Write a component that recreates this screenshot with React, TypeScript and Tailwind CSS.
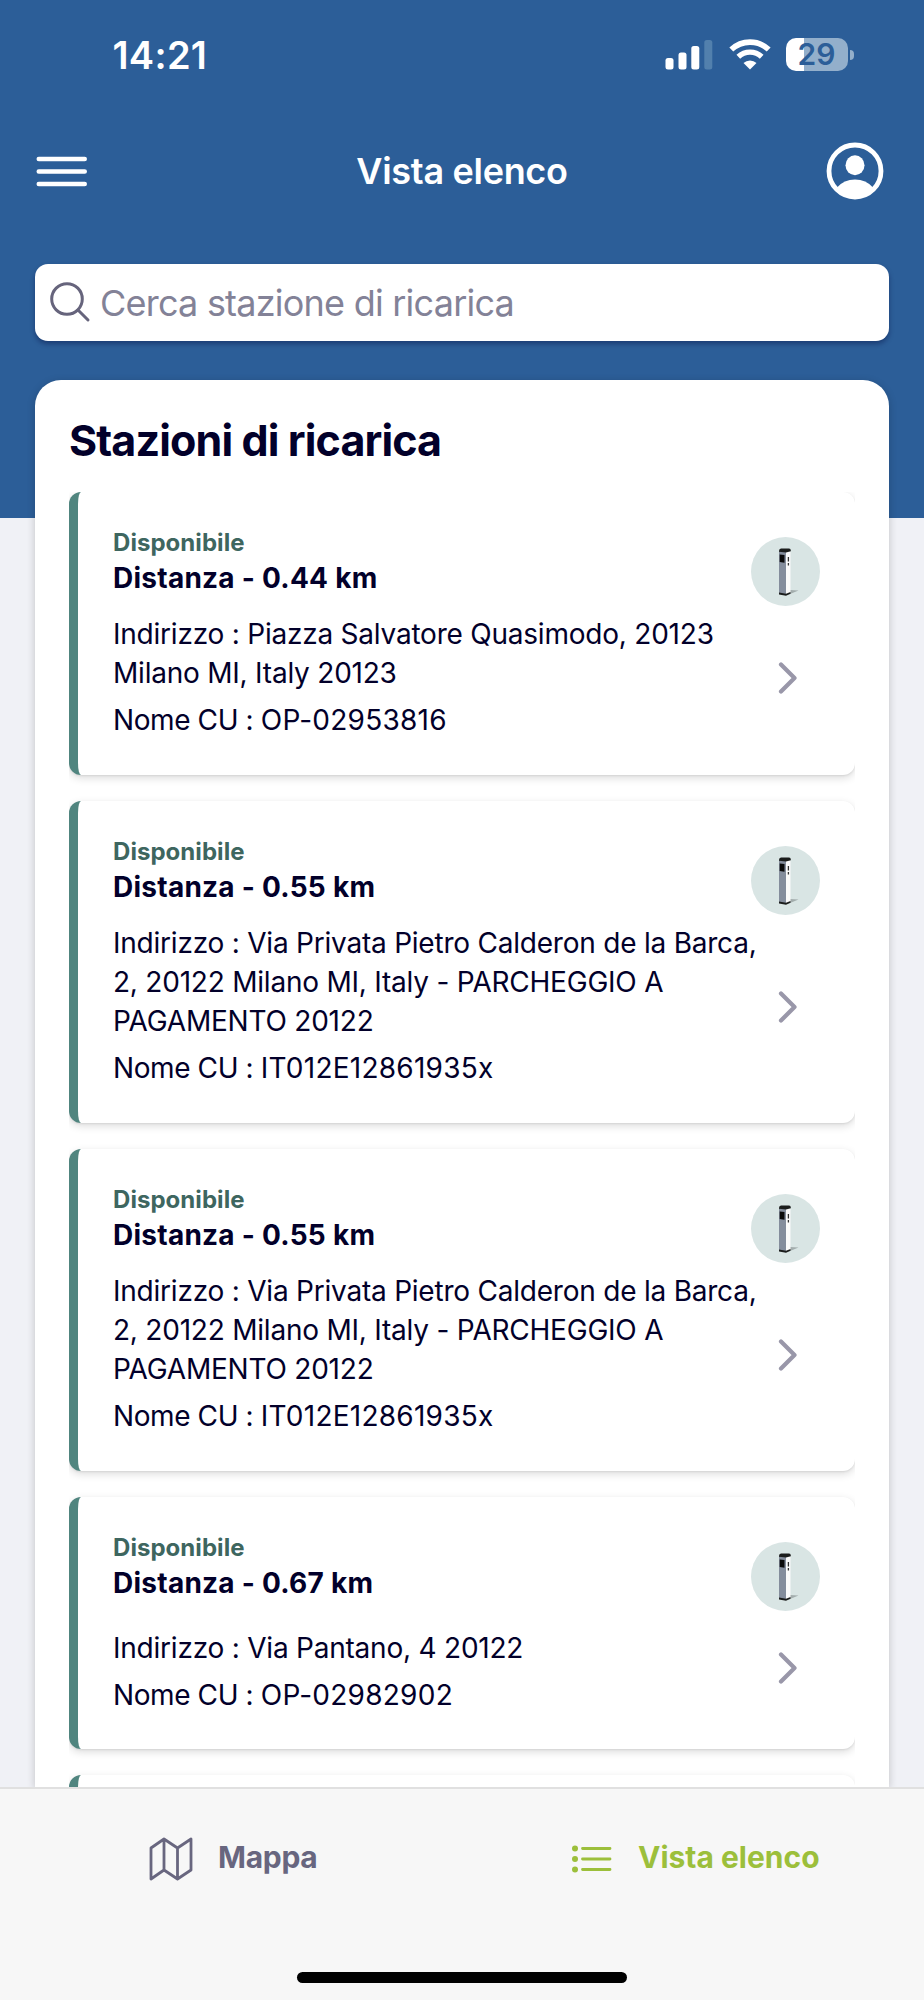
import React from "react";

type Station = {
  distance: string;
  address: string[];
  name: string;
  height: string;
  addressGap: string;
  chevronGap: string;
};

const stations: Station[] = [
  {
    distance: "0.44",
    address: ["Indirizzo : Piazza Salvatore Quasimodo, 20123", "Milano MI, Italy 20123"],
    name: "OP-02953816",
    height: "h-[283px]",
    addressGap: "mt-[18px]",
    chevronGap: "mt-[56px]",
  },
  {
    distance: "0.55",
    address: [
      "Indirizzo : Via Privata Pietro Calderon de la Barca,",
      "2, 20122 Milano MI, Italy - PARCHEGGIO A",
      "PAGAMENTO 20122",
    ],
    name: "IT012E12861935x",
    height: "h-[322px]",
    addressGap: "mt-[18px]",
    chevronGap: "mt-[76px]",
  },
  {
    distance: "0.55",
    address: [
      "Indirizzo : Via Privata Pietro Calderon de la Barca,",
      "2, 20122 Milano MI, Italy - PARCHEGGIO A",
      "PAGAMENTO 20122",
    ],
    name: "IT012E12861935x",
    height: "h-[322px]",
    addressGap: "mt-[18px]",
    chevronGap: "mt-[76px]",
  },
  {
    distance: "0.67",
    address: ["Indirizzo : Via Pantano, 4 20122"],
    name: "OP-02982902",
    height: "h-[252px]",
    addressGap: "mt-[27px]",
    chevronGap: "mt-[41px]",
  },
];

function ChargerIcon() {
  return (
    <svg viewBox="0 0 69 69" className="size-[69px] shrink-0">
      <circle cx="34.5" cy="34.5" r="34.5" fill="#d9e5e4" />
      <path d="M34 58 L39 53 L47.500 53.500 L39 57 Z" fill="#a3adad" />
      <path d="M28 14 H35 V58 L28 56.500 Z" fill="#848d9c" />
      <path d="M35 14.500 H39.500 V56 L35 58 Z" fill="#fafafa" />
      <path d="M28 14 Q28 11.500 30 11.500 H38 Q39.800 11.500 39.800 13.500 V14.300 L35 15.500 L28 14.800 Z" fill="#1b1d1c" />
      <path d="M28 55.500 L35 56.800 L39.500 55 V56.700 L35 58.700 L28 57.500 Z" fill="#1b1d1c" />
      <path d="M28.700 17.500 L33.500 18 V25.700 L28.700 25 Z" fill="#0a0a0a" />
      <path d="M37.400 20 V24.500 M37.400 26 V28.500" stroke="#333" strokeWidth="1.300" />
    </svg>
  );
}

function StationCard({ s }: { s: Station }) {
  return (
    <article
      className={`flex w-[786px] shrink-0 rounded-[12px] border-l-[9px] border-[#50857f] bg-white pr-[35px] pl-[35px] shadow-[0_3px_9px_rgba(0,0,0,0.14),0_1px_2px_rgba(0,0,0,0.08)] ${s.height}`}
    >
      <div className="flex w-0 flex-1 flex-col pt-[36px] whitespace-nowrap">
        <span className="text-[24px] leading-[30px] font-bold tracking-[0.05px] text-[#3e665f]">Disponibile</span>
        <span className="mt-px text-[28px] leading-[38px] font-bold tracking-[0.25px]">Distanza - {s.distance} km</span>
        <p className={`text-[28px] leading-[39px] tracking-[-0.22px] ${s.addressGap}`}>
          {s.address.map((line) => (
            <span key={line} className="block">
              {line}
            </span>
          ))}
        </p>
        <p className="mt-[8px] text-[28px] leading-[39px] tracking-[-0.4px]">
          Nome CU : <span className="tracking-[0.25px]">{s.name}</span>
        </p>
      </div>
      <div className="flex w-[69px] shrink-0 flex-col items-center pt-[45px]">
        <ChargerIcon />
        <svg viewBox="0 0 20 32" className={`ml-[5px] h-[32px] w-[20px] shrink-0 ${s.chevronGap}`} fill="none">
          <path d="M3 2.500 L16.500 16 L3 29.500" stroke="#9997a9" strokeWidth="4.200" strokeLinecap="round" strokeLinejoin="round" />
        </svg>
      </div>
    </article>
  );
}

export default function App() {
  return (
    <div className="flex h-[2000px] w-[924px] flex-col overflow-hidden bg-[linear-gradient(#2c5e98_518px,#f0f1f6_518px)] font-['Inter',sans-serif] text-[#02002a]">
      <div className="flex h-[110px] shrink-0 items-start justify-between pr-[70px] pl-[112.5px] text-white">
        <span className="mt-[32px] text-[38px] leading-[46px] font-semibold tracking-[0.3px]">14:21</span>
        <div className="mt-[38px] flex items-start">
          <svg viewBox="0 0 48 33" className="h-[33px] w-[48px]" fill="#fff">
            <rect x="0.500" y="20" width="8" height="11.500" rx="2.500" />
            <rect x="13.500" y="14.500" width="8" height="17" rx="2.500" />
            <rect x="26.300" y="8" width="8" height="23.500" rx="2.500" />
            <rect x="39.300" y="2" width="8" height="29.500" rx="2.500" fill="#5280ad" />
          </svg>
          <svg viewBox="0 0 42 33" className="ml-[16px] h-[33px] w-[42px]" fill="none" stroke="#fff">
            <path d="M2.300 11.600 A27 27 0 0 1 39.700 11.600" strokeWidth="5.600" />
            <path d="M9.300 18.700 A17.200 17.200 0 0 1 32.700 18.700" strokeWidth="5.400" />
            <path d="M21 31.500 L14.500 25 A9.500 9.500 0 0 1 27.500 25 Z" fill="#fff" stroke="none" />
          </svg>
          <div className="ml-[15px] flex h-[33px] w-[62px] items-center justify-center rounded-[10px] bg-[linear-gradient(90deg,#fff_18px,#93afcb_18px)] pr-px text-[30px] leading-[33px] font-semibold text-[#2c5e98]">
            29
          </div>
          <div className="mt-[12px] ml-[2px] h-[10px] w-[4px] rounded-r-full bg-[#93afcb]" />
        </div>
      </div>

      <header className="flex h-[122px] shrink-0 items-center justify-between pr-[40px] pl-[36px] text-white">
        <svg viewBox="0 0 52 32" className="h-[32px] w-[52px]" stroke="#fff" strokeWidth="4.600" strokeLinecap="round">
          <path d="M2.800 4 H48.700 M2.800 16.500 H48.700 M2.800 29 H48.700" />
        </svg>
        <h1 className="ml-[10px] text-[36px] leading-[44px] font-semibold tracking-[-0.3px]">Vista elenco</h1>
        <svg viewBox="0 0 58 58" className="size-[58px]" fill="#fff">
          <circle cx="29" cy="29" r="26" fill="none" stroke="#fff" strokeWidth="4.800" />
          <ellipse cx="29" cy="23.300" rx="9.500" ry="10" />
          <path d="M11 45.500 Q18 37.500 29 37.500 Q40 37.500 47 45.500 Q40 56.500 29 56.500 Q18 56.500 11 45.500 Z" />
        </svg>
      </header>

      <div className="mx-[35px] mt-[32px] flex h-[77px] shrink-0 items-center rounded-[13px] bg-white pl-[14px] shadow-[0_3px_5px_rgba(0,10,60,0.4)]">
        <svg viewBox="0 0 42 42" className="size-[42px]" fill="none" stroke="#66647c" strokeWidth="3" strokeLinecap="round">
          <circle cx="18" cy="17" r="15.300" />
          <path d="M29 28 L39 38" />
        </svg>
        <span className="ml-[9px] text-[36px] leading-[46px] tracking-[-0.77px] text-[#838297]">Cerca stazione di ricarica</span>
      </div>

      <main className="mx-[35px] mt-[39px] flex h-[1407px] shrink-0 flex-col overflow-hidden rounded-t-[26px] bg-white px-[34px] pt-[34px] shadow-[0_2px_8px_rgba(0,0,0,0.2)]">
        <h2 className="text-[43px] leading-[52px] font-bold tracking-[-0.87px] whitespace-nowrap">Stazioni di ricarica</h2>
        <section className="mt-[26px] flex flex-col gap-[26px] overflow-hidden">
          {stations.map((s, i) => (
            <StationCard key={i} s={s} />
          ))}
          <article className="h-[40px] w-[786px] shrink-0 rounded-t-[12px] border-l-[9px] border-[#50857f] bg-white shadow-[0_3px_9px_rgba(0,0,0,0.14)]" />
        </section>
      </main>

      <nav className="flex h-[213px] shrink-0 flex-col items-center border-t-2 border-[#e0e0e0] bg-[#f7f7f7]">
        <div className="flex h-[140px] w-full text-[30px] leading-[40px] font-bold">
          <div className="flex w-1/2 items-center pl-[149px] text-[#68667f]">
            <svg viewBox="0 0 44 44" className="size-[44px]" fill="none" stroke="#68667f" strokeWidth="2.800" strokeLinejoin="round">
              <path d="M2 11 L15 2 L28.500 11 L42 2 V33 L28.500 42 L15 33 L2 42 Z M15 2 V33 M28.500 11 V42" />
            </svg>
            <span className="ml-[25px] pb-[4px] tracking-[-0.3px]">Mappa</span>
          </div>
          <div className="flex w-1/2 items-center pl-[110px] text-[#9cbf3b]">
            <svg viewBox="0 0 40 28" className="h-[28px] w-[40px]" fill="#9cbf3b">
              <circle cx="3" cy="3.500" r="3" />
              <circle cx="3" cy="14" r="3" />
              <circle cx="3" cy="24.500" r="3" />
              <path d="M10.500 3.500 H38 M10.500 14 H38 M10.500 24.500 H38" stroke="#9cbf3b" strokeWidth="2.800" strokeLinecap="round" />
            </svg>
            <span className="ml-[26px] pb-[4px]">Vista elenco</span>
          </div>
        </div>
        <div className="mt-[43px] h-[11px] w-[330px] rounded-full bg-black" />
      </nav>
    </div>
  );
}
